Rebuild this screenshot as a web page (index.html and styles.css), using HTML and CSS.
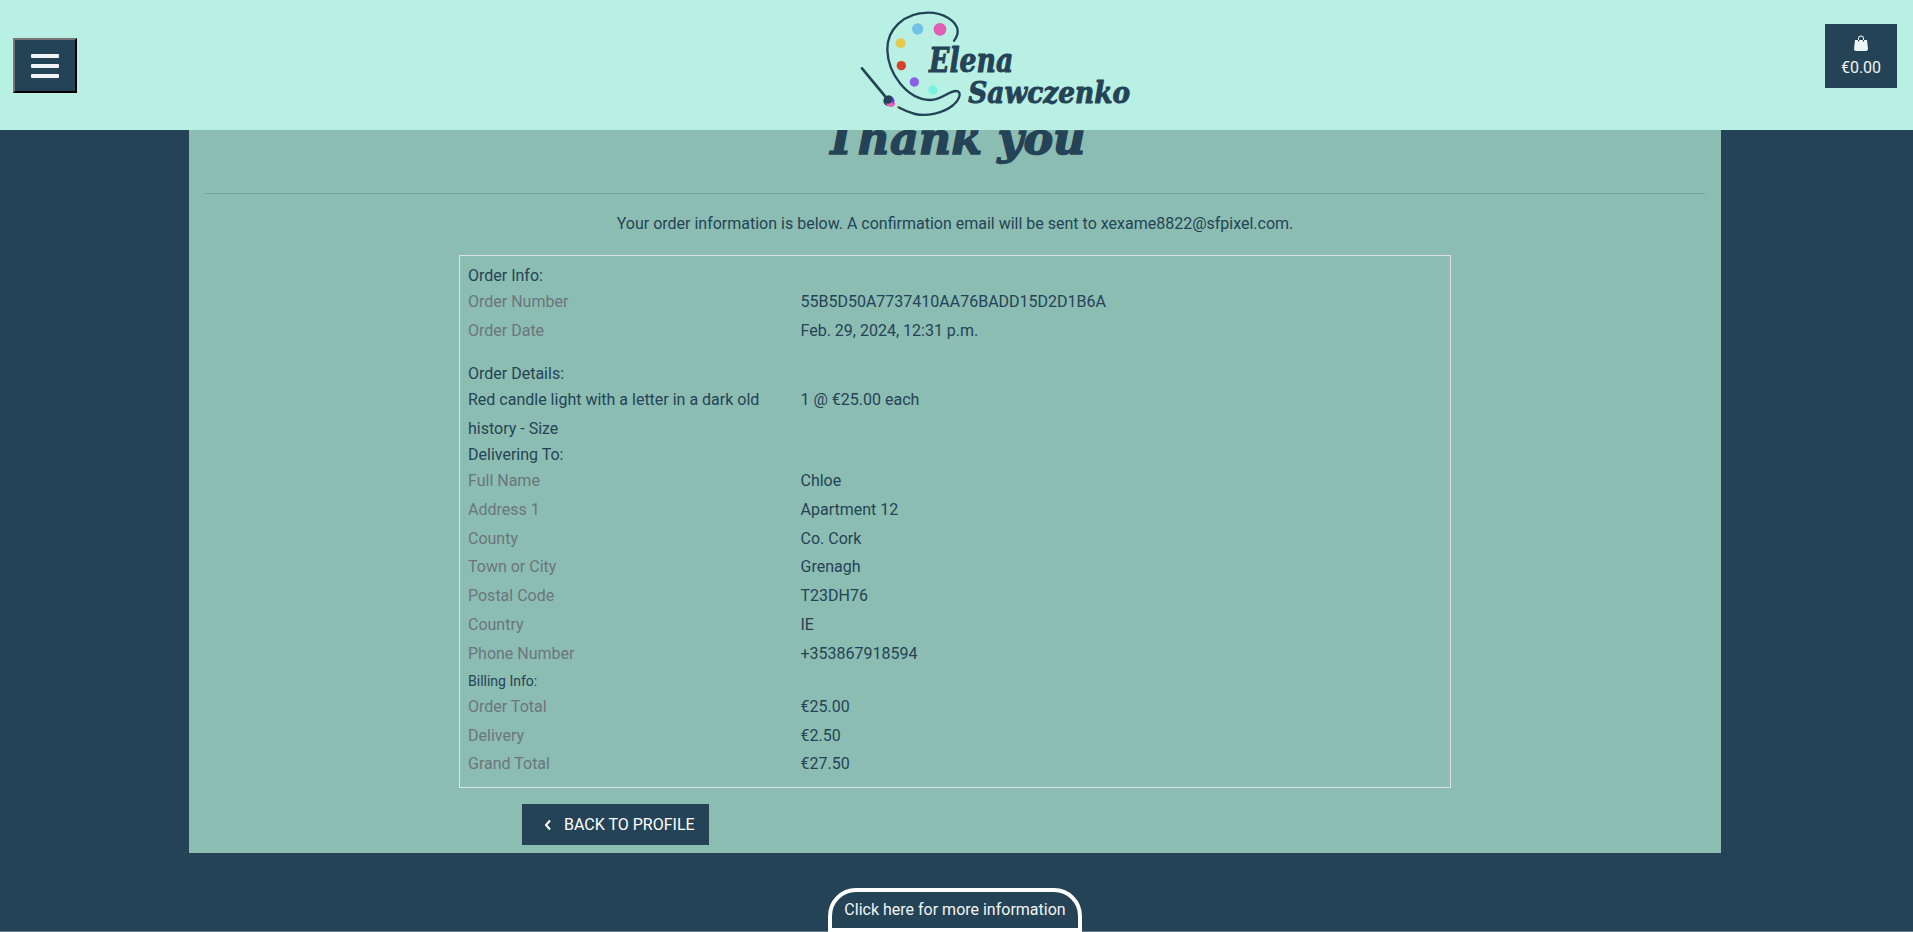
FILE: index.html
```html
<!DOCTYPE html>

<html>

<head>
	<title>Order confirmation</title>
	<link rel="stylesheet" href="styles.css">
</head>

<body>
	<header class="topbar">
		<button class="menu-toggle" type="button">
			<span></span>
			<span></span>
			<span></span>
		</button>

		<a class="logo" href="#">
			<svg viewBox="0 0 900 360" width="300" height="120">
				<path class="palette" d="M312 92C320 82 324 76 323 62C320 33 280 8 235 8C160 8 110 60 112 120C114 190 170 268 240 270C275 271 295 243 318 243C335 243 332 265 310 285C280 310 230 320 195 312C175 307 160 300 145 292"/>
				<path class="brush" d="M36 175L108 262"/>
				<circle cx="203" cy="57" r="17" fill="#74c1e8"/>
				<circle cx="270" cy="58" r="19" fill="#e05fb5"/>
				<circle cx="152" cy="100" r="15" fill="#e6c84f"/>
				<circle cx="154" cy="167" r="14" fill="#d5412b"/>
				<circle cx="193" cy="216" r="14" fill="#8b5fe8"/>
				<circle cx="249" cy="240" r="14" fill="#7af2e0"/>
				<circle cx="116" cy="272" r="16" fill="#254356"/>
				<path d="M106 280C116 284 126 280 128 268L136 282C130 294 114 294 106 280Z" fill="#e45fc0"/>
				<path d="M126 260L134 272L130 282L124 270Z" fill="#6a2fe0"/>
				<path d="M138 288L146 291L140 294Z" fill="#f2e04a"/>
				<text class="logo-text" x="237" y="185" font-size="100" textLength="253" lengthAdjust="spacingAndGlyphs">Elena</text>
				<text class="logo-text" x="355" y="280" font-size="92" textLength="485" lengthAdjust="spacingAndGlyphs">Sawczenko</text>
			</svg>
		</a>

		<a class="cart" href="#">
			<svg viewBox="0 0 14 16" width="14" height="16">
				<path d="M4 5V3.6C4 1.9 5.300 .6 7 .6S10 1.900 10 3.6V5H9V3.600C9 2.500 8.100 1.600 7 1.600S5 2.500 5 3.600V5Z"/>
				<path d="M1 5H3.900V6.500H5.100V5H8.900V6.500H10.100V5H13L14 14C14 15.200 13.100 16 12 16H2C.900 16 0 15.200 0 14Z"/>
			</svg>
			<span>€0.00</span>
		</a>
	</header>

	<main class="card">
		<h1>Thank you</h1>
		<hr>
		<p class="intro">Your order information is below. A confirmation email will be sent to xexame8822@sfpixel.com.</p>

		<div class="order-box">
			<div class="section section-first">
				<p class="heading">Order Info:</p>
				<div class="row"><span class="muted">Order Number</span><span>55B5D50A7737410AA76BADD15D2D1B6A</span></div>
				<div class="row"><span class="muted">Order Date</span><span>Feb. 29, 2024, 12:31 p.m.</span></div>
			</div>

			<div class="section">
				<p class="heading">Order Details:</p>
				<div class="row"><span class="item-name">Red candle light with a letter in a dark old history - Size</span><span>1 @ €25.00 each</span></div>
			</div>

			<div class="section section-tight">
				<p class="heading">Delivering To:</p>
				<div class="row"><span class="muted">Full Name</span><span>Chloe</span></div>
				<div class="row"><span class="muted">Address 1</span><span>Apartment 12</span></div>
				<div class="row"><span class="muted">County</span><span>Co. Cork</span></div>
				<div class="row"><span class="muted">Town or City</span><span>Grenagh</span></div>
				<div class="row"><span class="muted">Postal Code</span><span>T23DH76</span></div>
				<div class="row"><span class="muted">Country</span><span>IE</span></div>
				<div class="row"><span class="muted">Phone Number</span><span>+353867918594</span></div>
			</div>

			<div class="section section-billing">
				<p class="heading heading-small">Billing Info:</p>
				<div class="row"><span class="muted">Order Total</span><span>€25.00</span></div>
				<div class="row"><span class="muted">Delivery</span><span>€2.50</span></div>
				<div class="row"><span class="muted">Grand Total</span><span>€27.50</span></div>
			</div>
		</div>

		<div class="actions">
			<a class="back-btn" href="#">
				<svg viewBox="0 0 8 12" width="8" height="12"><path d="M6 1.500L2 6L6 10.500"/></svg>
				<span>Back to profile</span>
			</a>
		</div>
	</main>

	<footer class="site-footer">
		<a class="more-tab" href="#">Click here for more information</a>
	</footer>
</body>

</html>
```

FILE: styles.css
```css
* {
	box-sizing: border-box;
}

body {
	margin: 0;
	font-family: Roboto, sans-serif;
	font-size: 16px;
	color: #254356;
	background-color: #254356;
}

a {
	color: inherit;
	text-decoration: none;
}

.topbar {
	position: fixed;
	top: 0;
	left: 0;
	right: 0;
	height: 130px;
	display: flex;
	justify-content: space-between;
	align-items: flex-start;
	padding: 0 16px 0 13px;
	background-color: #b8f0e4;
}

.menu-toggle {
	width: 64px;
	height: 55px;
	margin-top: 38px;
	padding: 0;
	display: flex;
	flex-direction: column;
	align-items: center;
	justify-content: center;
	gap: 6px;
	background-color: #254356;
	border: 2px outset #767676;
	border-color: #767676 #212121 #212121 #767676;
}

.menu-toggle span {
	width: 28px;
	height: 4px;
	border-radius: 1px;
	background-color: #f1f4f5;
}

.logo {
	display: block;
	margin: 10px 0 0 98px;
	height: 120px;
}

.logo svg {
	display: block;
}

.palette {
	fill: none;
	stroke: #254356;
	stroke-width: 7;
	stroke-linecap: round;
}

.brush {
	fill: none;
	stroke: #254356;
	stroke-width: 8;
	stroke-linecap: round;
}

.logo-text {
	font-family: "DejaVu Serif", serif;
	font-weight: bold;
	font-style: italic;
	fill: #254356;
	stroke: #254356;
	stroke-width: 3;
	stroke-linejoin: round;
}

.cart {
	width: 72px;
	height: 64px;
	margin-top: 24px;
	padding-top: 11px;
	display: flex;
	flex-direction: column;
	align-items: center;
	gap: 7px;
	color: #f1f4f5;
	background-color: #254356;
}

.cart svg {
	fill: #f1f4f5;
}

.card {
	width: 1532px;
	height: 853px;
	margin-left: 189px;
	padding: 92px 16px 0;
	background-color: #8bbdb2;
}

h1 {
	margin: 0;
	height: 84px;
	font-family: "DejaVu Serif", serif;
	font-size: 44.5px;
	font-style: italic;
	font-weight: bold;
	line-height: 92px;
	text-align: center;
	-webkit-text-stroke: 1.5px #254356;
}

hr {
	margin: 17px 0 0;
	border: 0;
	border-top: 1px solid #72a196;
}

.intro {
	margin: 20px 0 0;
	line-height: 19px;
	text-align: center;
}

.order-box {
	width: 992px;
	height: 533px;
	margin: 22px 0 0 254px;
	padding: 10px 8px 0;
	border: 1px solid #dee2e6;
}

.section {
	margin-top: 18px;
}

.section-first {
	margin-top: 0;
}

.section-tight {
	margin-top: 1.3px;
}

.section-billing {
	margin-top: 3px;
}

.heading {
	margin: 0 0 3px;
	line-height: 19.2px;
}

.heading-small {
	font-size: 14px;
	margin-bottom: 2px;
}

.row {
	display: grid;
	grid-template-columns: 332.5px 1fr;
	line-height: 28.8px;
}

.item-name {
	width: 300px;
}

.muted {
	color: #6c757d;
}

.actions {
	margin: 16px 0 0 317px;
}

.back-btn {
	display: inline-flex;
	align-items: center;
	gap: 12px;
	height: 41px;
	width: 187px;
	padding-left: 22px;
	color: #fff;
	text-transform: uppercase;
	background-color: #254356;
}

.back-btn svg {
	fill: none;
	stroke: #fff;
	stroke-width: 2;
}

.site-footer {
	height: 79px;
	padding-top: 35px;
	display: flex;
	justify-content: center;
	box-shadow: inset 0 -1px 0 #6b7f8b;
}

.more-tab {
	width: 254px;
	height: 44px;
	padding-top: 5px;
	margin-left: -3px;
	color: #f1f4f5;
	line-height: 26px;
	text-align: center;
	border: 4px solid #fff;
	border-radius: 28px 28px 0 0;
}
```
